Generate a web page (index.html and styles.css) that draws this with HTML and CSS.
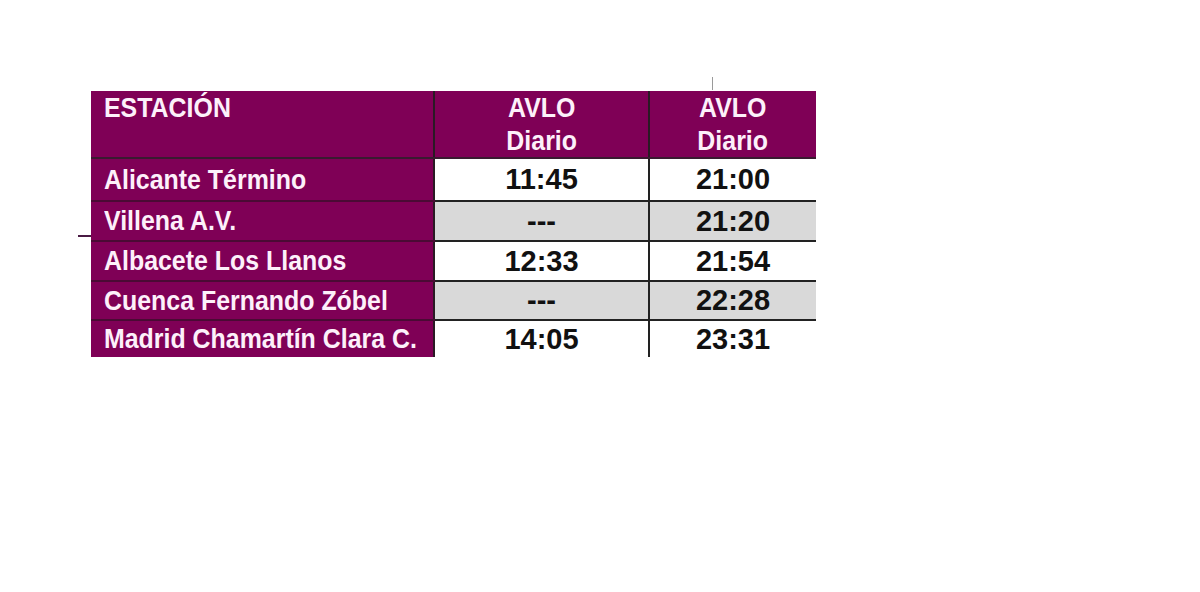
FILE: index.html
```html
<!DOCTYPE html>
<html lang="es">
<head>
<meta charset="utf-8">
<title>Horarios AVLO</title>
<link rel="stylesheet" href="styles.css">
</head>
<body>
<div class="wrap">
  <span class="tick"></span>
  <span class="mark"></span>
  <table class="sched">
    <colgroup>
      <col class="c1">
      <col class="c2">
      <col class="c3">
    </colgroup>
    <thead>
      <tr class="head">
        <th class="st"><span class="nar">ESTACIÓN</span></th>
        <th class="tc"><span class="nar ctr">AVLO<br>Diario</span></th>
        <th class="tc last"><span class="nar ctr">AVLO<br>Diario</span></th>
      </tr>
    </thead>
    <tbody>
      <tr class="r1"><th class="st"><span class="nar">Alicante Término</span></th><td>11:45</td><td class="last">21:00</td></tr>
      <tr class="r2 grey"><th class="st"><span class="nar">Villena A.V.</span></th><td>---</td><td class="last">21:20</td></tr>
      <tr class="r3"><th class="st"><span class="nar">Albacete Los Llanos</span></th><td>12:33</td><td class="last">21:54</td></tr>
      <tr class="r4 grey"><th class="st"><span class="nar">Cuenca Fernando Zóbel</span></th><td>---</td><td class="last">22:28</td></tr>
      <tr class="r5 end"><th class="st"><span class="nar">Madrid Chamartín Clara C.</span></th><td>14:05</td><td class="last">23:31</td></tr>
    </tbody>
  </table>
</div>
</body>
</html>
```
FILE: styles.css
```css
html, body {
  margin: 0;
  padding: 0;
  background: #ffffff;
}
.wrap {
  position: relative;
  padding: 91px 0 0 91px;
}
.tick {
  position: absolute;
  left: 712px;
  top: 77px;
  width: 1px;
  height: 13px;
  background: #9a9a9a;
}
.mark {
  position: absolute;
  left: 78px;
  top: 235px;
  width: 13px;
  height: 2px;
  background: #4a1a44;
}
.sched {
  border-collapse: collapse;
  table-layout: fixed;
  width: 725px;
}
.c1 { width: 343px; }
.c2 { width: 215px; }
.c3 { width: 167px; }
.sched th, .sched td {
  padding: 0;
  border: 0;
  overflow: visible;
  white-space: nowrap;
}
.nar {
  display: inline-block;
  transform: scaleX(0.89);
  transform-origin: left center;
}
.nar.ctr {
  transform-origin: center center;
}
.st {
  background: #7f0056;
  color: #fdf0fa;
  text-align: left;
  padding-left: 13px !important;
  font-family: "Liberation Sans", Arial, sans-serif;
  font-weight: bold;
  font-size: 28px;
  border-right: 2px solid #2a1a24 !important;
  border-bottom: 2px solid #4a0a34 !important;
  vertical-align: middle;
}
.head th {
  height: 66px;
  background: #7f0056;
  color: #fdf0fa;
  font-family: "Liberation Sans", Arial, sans-serif;
  font-weight: bold;
  font-size: 28px;
  line-height: 33px;
  vertical-align: top;
  border-bottom: 2px solid #3a1a30 !important;
}
.head .tc {
  text-align: center;
  border-right: 2px solid #2a1a24;
}
.head .last {
  border-right: 0;
}
.sched td {
  text-align: center;
  font-family: "Liberation Sans", Arial, sans-serif;
  font-weight: bold;
  font-size: 29px;
  color: #111111;
  border-right: 2px solid #222222;
  border-bottom: 2px solid #222222;
  vertical-align: middle;
}
.sched td.last {
  border-right: 0;
}
.grey td {
  background: #d9d9d9;
}
.r1 th, .r1 td { height: 41px; }
.r2 th, .r2 td { height: 38px; }
.r3 th, .r3 td { height: 38px; }
.r4 th, .r4 td { height: 37px; }
.r5 th, .r5 td { height: 36px; }
.end th { border-bottom: 0 !important; }
.end td { border-bottom: 0; }
```
